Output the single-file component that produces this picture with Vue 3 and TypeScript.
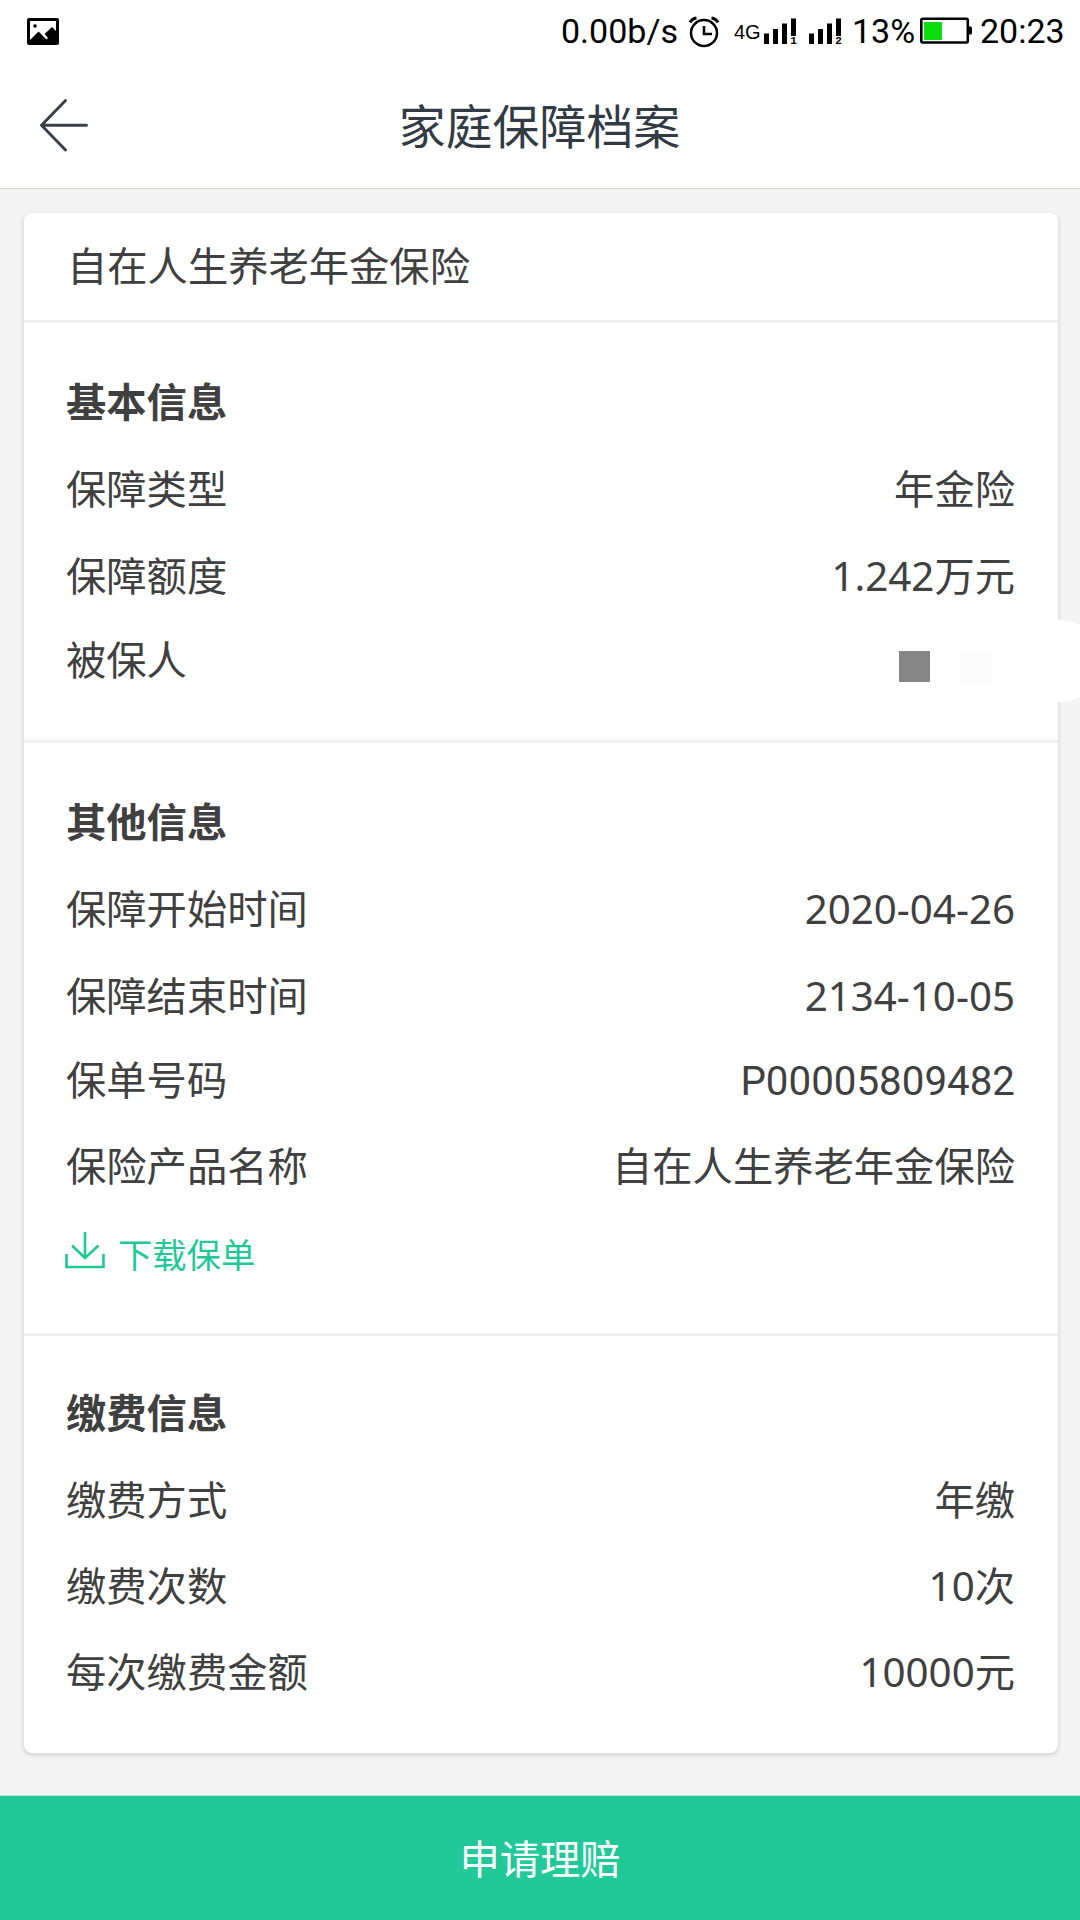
<script setup lang="ts">
interface Row {
  label: string
  value?: string
  masked?: boolean
  pitch: number
  latin?: boolean
}

interface Section {
  title: string
  rows: Row[]
  download?: boolean
}

const productName = '自在人生养老年金保险'

const sections: Section[] = [
  {
    title: '基本信息',
    rows: [
      { label: '保障类型', value: '年金险', pitch: 87 },
      { label: '保障额度', value: '1.242万元', pitch: 84 },
      { label: '被保人', masked: true, pitch: 80 },
    ],
  },
  {
    title: '其他信息',
    download: true,
    rows: [
      { label: '保障开始时间', value: '2020-04-26', pitch: 87 },
      { label: '保障结束时间', value: '2134-10-05', pitch: 84 },
      { label: '保单号码', value: 'P00005809482', pitch: 86, latin: true },
      { label: '保险产品名称', value: productName, pitch: 89 },
    ],
  },
  {
    title: '缴费信息',
    rows: [
      { label: '缴费方式', value: '年缴', pitch: 86 },
      { label: '缴费次数', value: '10次', pitch: 86 },
      { label: '每次缴费金额', value: '10000元', pitch: 80 },
    ],
  },
]

const signals = ['1', '2']
</script>

<template>
  <div class="screen">
    <div class="status">
      <svg class="photo" width="32" height="27" viewBox="0 0 32 27">
        <rect width="32" height="27" rx="2" fill="#000" />
        <path d="M3 3H29V13L25 9L17.5 16L21 20L19.5 21.5L11.5 13.5L3 22Z" fill="#fff" />
        <circle cx="8" cy="8" r="1.8" fill="#000" />
      </svg>
      <span class="speed">0.00b/s</span>
      <svg class="alarm" width="32" height="32" viewBox="0 0 32 32" fill="none" stroke="#000">
        <circle cx="16" cy="17" r="13" stroke-width="2.5" />
        <path d="M16 10V18H24" stroke-width="2.6" />
        <path d="M2 6.5Q4 2.5 8.5 2M23.500 2Q28 2.500 30 6.500" stroke-width="3" />
      </svg>
      <span class="network">4G</span>
      <svg v-for="s in signals" :key="s" class="signal" width="37" height="34" viewBox="0 0 37 34">
        <path d="M0 16.500h5V27H0ZM9 12h5V27H9ZM18 6.500h5V27H18ZM27 1.500h5V19H27Z" />
        <text x="29.500" y="27" text-anchor="middle" class="sim">{{ s }}</text>
      </svg>
      <span class="percent">13%</span>
      <svg class="battery" width="52" height="27" viewBox="0 0 52 27">
        <rect x="1.300" y="1.800" width="46.500" height="23.700" rx="1.500" fill="#fff" stroke="#000" stroke-width="2.600" />
        <path d="M48 9.500H50.500Q52 9.500 52 11V16Q52 17.500 50.500 17.500H48Z" />
        <rect x="4" y="5" width="18" height="18" fill="#0bdc0b" />
      </svg>
      <span class="clock">20:23</span>
    </div>

    <header class="nav">
      <svg class="back" width="50" height="54" viewBox="0 0 50 54" fill="none" stroke="#3a4048" stroke-width="2.900" stroke-linecap="round" stroke-linejoin="round">
        <path d="M26.500 2.500L2.500 27.300L26.500 52M2.500 27.300H47.500" />
      </svg>
      <h1>家庭保障档案</h1>
    </header>

    <main>
      <article class="card">
        <div class="product">{{ productName }}</div>
        <section v-for="section in sections" :key="section.title">
          <h2>{{ section.title }}</h2>
          <div v-for="row in section.rows" :key="row.label" class="row" :style="{ height: row.pitch + 'px' }">
            <span>{{ row.label }}</span>
            <span v-if="row.masked" class="mask"><i></i><i class="faint"></i></span>
            <span v-else :class="{ latin: row.latin }">{{ row.value }}</span>
          </div>
          <div v-if="section.download" class="download">
            <svg width="40" height="38" viewBox="0 0 40 38" fill="none" stroke="#1fc996" stroke-width="2.600">
              <path d="M20 1V26M7 14.500L20 27L33.500 14.500M1.500 23V36H38.500V23" />
            </svg>
            <span>下载保单</span>
          </div>
        </section>
      </article>
    </main>

    <footer>申请理赔</footer>
    <div class="bubble"></div>
  </div>
</template>

<style>
body {
  margin: 0;
  background: #f4f4f4;
}
</style>

<style scoped>
.screen {
  position: relative;
  display: flex;
  flex-direction: column;
  width: 1080px;
  height: 1920px;
  overflow: hidden;
  background: #f4f4f4;
  color: #404040;
  font-family: "Noto Sans", "Noto Sans CJK SC", sans-serif;
  font-size: 40.3px;
}

.status {
  display: flex;
  align-items: flex-start;
  height: 64px;
  background: #fff;
  color: #000;
  font-family: Roboto, sans-serif;
  font-size: 34px;
  line-height: 62px;
  white-space: nowrap;
}

.status svg {
  flex: none;
}

.photo {
  margin: 18px 0 0 27px;
}

.speed {
  width: 127px;
  margin-left: 502px;
}

.alarm {
  margin-top: 16px;
}

.network {
  width: 30px;
  margin-left: 14px;
  font-family: "Liberation Sans", sans-serif;
  font-size: 20px;
  line-height: 64px;
}

.signal {
  margin: 17px 8px 0 0;
}

.sim {
  font-family: "Liberation Mono", monospace;
  font-size: 11px;
  font-weight: 700;
}

.percent {
  width: 68px;
  margin-left: -2px;
}

.battery {
  margin-top: 17px;
}

.clock {
  margin-left: 8px;
}

.nav {
  display: flex;
  box-sizing: border-box;
  height: 125px;
  border-bottom: 1px solid #dadcd6;
  background: #fff;
}

.back {
  flex: none;
  margin: 34px 0 0 39px;
}

h1 {
  flex: 1;
  margin: 27px 90px 0 0;
  color: #323a44;
  font-size: 46.9px;
  font-weight: 400;
  line-height: 70px;
  text-align: center;
}

main {
  flex: 1;
  padding: 24px 22px 0 24px;
}

.card {
  height: 1540px;
  border-radius: 8px;
  background: #fff;
  box-shadow: 0 2px 5px rgba(0, 0, 0, 0.16);
}

.product {
  height: 107px;
  padding-left: 43px;
  line-height: 106px;
}

section {
  box-sizing: border-box;
  padding: 49px 43px 0 42px;
  border-top: 3px solid #f0f0f0;
}

section:nth-of-type(1) {
  height: 420px;
}

section:nth-of-type(2) {
  height: 593px;
}

section:nth-of-type(3) {
  padding-top: 47px;
}

h2 {
  height: 87px;
  margin: 0;
  font-size: 40.3px;
  font-weight: 700;
  line-height: 60px;
}

.row {
  display: flex;
  justify-content: space-between;
  line-height: 60px;
}

.latin {
  font-family: Roboto, sans-serif;
  line-height: 63px;
}

.mask {
  display: flex;
  gap: 31px;
  margin: 21px 23px 0 0;
}

.mask i {
  width: 31px;
  height: 31px;
  background: #858585;
}

.mask .faint {
  background: #fcfcfc;
}

.download {
  display: flex;
  margin-left: -1px;
  color: #1fc996;
  font-size: 34.3px;
  line-height: 60px;
}

.download svg {
  margin-top: 6px;
}

.download span {
  margin-left: 13px;
}

footer {
  box-sizing: border-box;
  height: 125px;
  border-top: 1px solid #b5e6d4;
  background: #20c997;
  background-clip: padding-box;
  color: #fff;
  line-height: 125px;
  text-align: center;
}

.bubble {
  position: absolute;
  top: 620px;
  left: 1019px;
  width: 82px;
  height: 82px;
  border-radius: 50%;
  background: #fff;
}
</style>
